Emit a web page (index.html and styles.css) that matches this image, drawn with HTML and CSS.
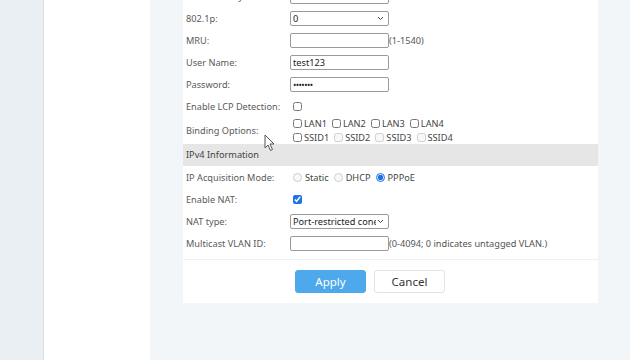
FILE: index.html
```html
<!DOCTYPE html>
<html lang="en">
<head>
    <meta charset="UTF-8">
    <title>WAN Settings</title>
    <link rel="stylesheet" href="styles.css">
</head>
<body>
    <div class="layout">
        <div class="sidebar"></div>
        <div class="gutter"></div>
        <div class="main">
            <div class="card">
                <div class="row cut">
                    <label>VLAN Priority:</label>
                    <div class="field"><input type="text" class="text"></div>
                </div>
                <div class="row">
                    <label>802.1p:</label>
                    <div class="field">
                        <select class="sel"><option>0</option></select>
                    </div>
                </div>
                <div class="row">
                    <label>MRU:</label>
                    <div class="field"><input type="text" class="text"><span class="hint">(1-1540)</span></div>
                </div>
                <div class="row">
                    <label>User Name:</label>
                    <div class="field"><input type="text" class="text" value="test123"></div>
                </div>
                <div class="row">
                    <label>Password:</label>
                    <div class="field"><input type="password" class="text pw" value="1234567"></div>
                </div>
                <div class="row">
                    <label>Enable LCP Detection:</label>
                    <div class="field"><input type="checkbox" class="chk"></div>
                </div>
                <div class="row tall">
                    <label>Binding Options:</label>
                    <div class="field binds">
                        <div class="bind-line">
                            <span class="opt"><input type="checkbox" class="chk">LAN1</span>
                            <span class="opt"><input type="checkbox" class="chk">LAN2</span>
                            <span class="opt"><input type="checkbox" class="chk">LAN3</span>
                            <span class="opt"><input type="checkbox" class="chk">LAN4</span>
                        </div>
                        <div class="bind-line">
                            <span class="opt"><input type="checkbox" class="chk">SSID1</span>
                            <span class="opt"><input type="checkbox" class="chk" disabled>SSID2</span>
                            <span class="opt"><input type="checkbox" class="chk" disabled>SSID3</span>
                            <span class="opt"><input type="checkbox" class="chk" disabled>SSID4</span>
                        </div>
                    </div>
                </div>
                <div class="section">IPv4 Information</div>
                <div class="row">
                    <label>IP Acquisition Mode:</label>
                    <div class="field">
                        <span class="opt"><input type="radio" name="mode" class="rad" disabled>Static</span>
                        <span class="opt"><input type="radio" name="mode" class="rad" disabled>DHCP</span>
                        <span class="opt"><input type="radio" name="mode" class="rad" checked>PPPoE</span>
                    </div>
                </div>
                <div class="row">
                    <label>Enable NAT:</label>
                    <div class="field"><input type="checkbox" class="chk" checked></div>
                </div>
                <div class="row">
                    <label>NAT type:</label>
                    <div class="field">
                        <select class="sel"><option>Port-restricted cone NAT</option></select>
                    </div>
                </div>
                <div class="row">
                    <label>Multicast VLAN ID:</label>
                    <div class="field"><input type="text" class="text"><span class="hint">(0-4094; 0 indicates untagged VLAN.)</span></div>
                </div>
                <div class="actions">
                    <button class="btn primary">Apply</button>
                    <button class="btn">Cancel</button>
                </div>
            </div>
        </div>
        <div class="edge"></div>
    </div>
    <svg class="pointer" width="12" height="18" viewBox="0 0 12 18">
        <path d="M1 1 L1 14 L4 11 L6.5 16.5 L8.5 15.5 L6 10 L10 10 Z" fill="#fff" stroke="#555" stroke-width="1"/>
    </svg>
</body>
</html>
```

FILE: styles.css
```css
html, body {
    margin: 0;
    padding: 0;
    height: 100%;
    overflow: hidden;
}
body {
    font-family: "Noto Sans", "Open Sans", sans-serif;
    font-size: 9.2px;
    color: #5a5a5a;
    position: relative;
}
.layout {
    display: flex;
    height: 360px;
}
.sidebar {
    width: 43px;
    background: #e9eff2;
    border-right: 1px solid #d9e0e4;
}
.gutter {
    width: 106px;
    background: #fff;
}
.main {
    width: 480px;
    background: #f2f6f9;
    padding: 0 32px 0 33px;
    box-sizing: border-box;
}
.edge {
    flex: 1;
    background: #fff;
}
.card {
    background: #fff;
    margin-top: -15px;
    padding-bottom: 10px;
}
.row {
    display: flex;
    align-items: center;
    height: 22px;
}
.row.tall {
    height: 27px;
}
.row label {
    width: 104px;
    padding-left: 3px;
    flex-shrink: 0;
}
.field {
    display: flex;
    align-items: center;
    color: #444;
}
.text, .sel {
    width: 99px;
    height: 15px;
    box-sizing: border-box;
    border: 1px solid #9a9a9a;
    border-radius: 2px;
    font-family: inherit;
    font-size: 9.2px;
    color: #222;
    padding: 0 2px;
    margin: 0;
    background: #fff;
    outline: none;
}
.pw {
    font-size: 9px;
    letter-spacing: -0.6px;
}
.sel {
    -webkit-appearance: none;
    appearance: none;
    padding: 0 12px 0 2px;
    background: #fff url("data:image/svg+xml,%3Csvg xmlns='http://www.w3.org/2000/svg' width='7' height='5'%3E%3Cpath d='M1 1l2.5 2.5L6 1' fill='none' stroke='%23444' stroke-width='1'/%3E%3C/svg%3E") no-repeat right 4px center;
}
.hint {
    color: #555;
}
.chk {
    width: 9px;
    height: 9px;
    margin: 0 2px 0 3px;
    accent-color: #1a73e8;
}
.rad {
    width: 9px;
    height: 9px;
    margin: 0 3px 0 3px;
    accent-color: #1a73e8;
}
.binds {
    flex-direction: column;
    align-items: flex-start;
    line-height: 14px;
}
.bind-line {
    display: flex;
}
.opt {
    display: inline-flex;
    align-items: center;
    margin-right: 2px;
}
.bind-line .opt .chk {
    margin: 0 2px 0 3px;
}
.section {
    background: #e6e6e6;
    height: 22px;
    line-height: 22px;
    padding-left: 3px;
    color: #444;
}
.actions {
    border-top: 1px solid #eef0f2;
    margin-top: 5px;
    padding-top: 10px;
    display: flex;
    gap: 8px;
    padding-left: 112px;
}
.btn {
    width: 71px;
    height: 23px;
    font-family: inherit;
    font-size: 11.5px;
    border: 1px solid #e3e3e3;
    border-radius: 3px;
    background: #fff;
    color: #333;
}
.btn.primary {
    background: #4ea8ec;
    border-color: #4ea8ec;
    color: #fff;
}
.pointer {
    position: absolute;
    left: 264px;
    top: 134px;
}
```
